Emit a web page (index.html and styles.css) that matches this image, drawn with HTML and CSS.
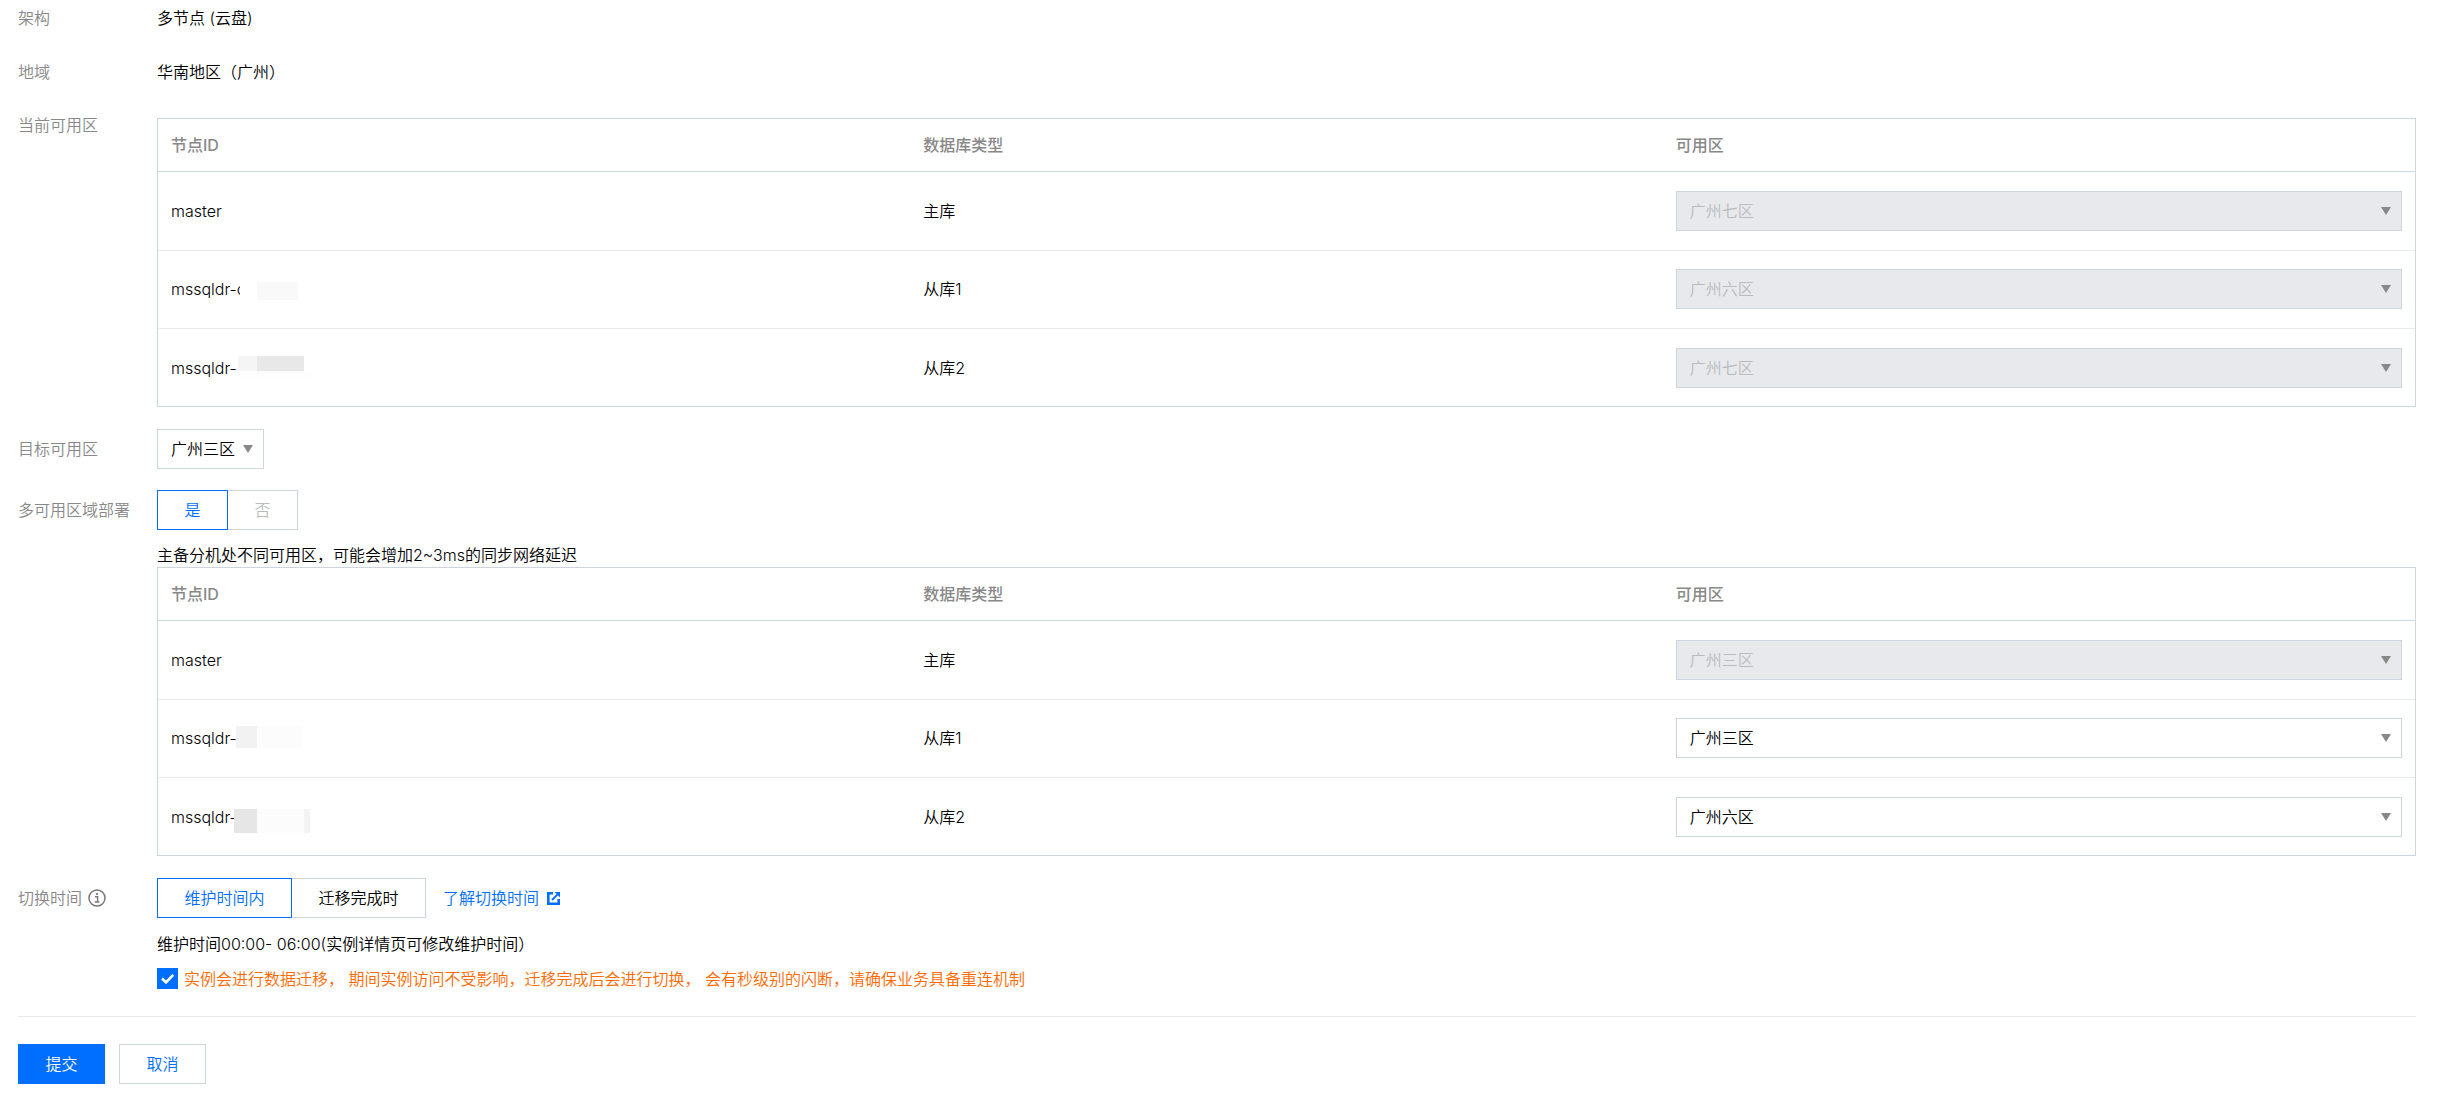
FILE: index.html
```html
<!DOCTYPE html>
<html lang="zh-CN">
<head>
<meta charset="utf-8">
<title>迁移可用区</title>
<link rel="stylesheet" href="styles.css">
</head>
<body>
<form class="page">
  <div class="row row-plain"><div class="label">架构</div><div class="value">多节点 (云盘)</div></div>
  <div class="row row-plain row-region"><div class="label">地域</div><div class="value">华南地区（广州）</div></div>

  <div class="row row-current">
    <div class="label label-table">当前可用区</div>
    <div class="content">
      <div class="table-box">
        <table class="zones">
          <thead><tr><th>节点ID</th><th>数据库类型</th><th>可用区</th></tr></thead>
          <tbody>
            <tr><td>master</td><td>主库</td><td><div class="select disabled"><span>广州七区</span><i class="caret"></i></div></td></tr>
            <tr><td><span class="node">mssqldr-c<i class="patch p-a1"></i><i class="patch p-a2"></i></span></td><td>从库1</td><td><div class="select disabled"><span>广州六区</span><i class="caret"></i></div></td></tr>
            <tr><td><span class="node">mssqldr-<i class="patch p-b1"></i><i class="patch p-b2"></i><i class="patch p-b3"></i></span></td><td>从库2</td><td><div class="select disabled"><span>广州七区</span><i class="caret"></i></div></td></tr>
          </tbody>
        </table>
      </div>
    </div>
  </div>

  <div class="row row-target">
    <div class="label">目标可用区</div>
    <div class="content"><div class="select inline"><span>广州三区</span><i class="caret"></i></div></div>
  </div>

  <div class="row row-multi">
    <div class="label">多可用区域部署</div>
    <div class="content">
      <div class="toggle toggle-small"><button type="button" class="opt active">是</button><button type="button" class="opt muted">否</button></div>
      <div class="note">主备分机处不同可用区，可能会增加2~3ms的同步网络延迟</div>
      <div class="table-box">
        <table class="zones">
          <thead><tr><th>节点ID</th><th>数据库类型</th><th>可用区</th></tr></thead>
          <tbody>
            <tr><td>master</td><td>主库</td><td><div class="select disabled"><span>广州三区</span><i class="caret"></i></div></td></tr>
            <tr><td><span class="node">mssqldr-<i class="patch p-c1"></i><i class="patch p-c2"></i></span></td><td>从库1</td><td><div class="select"><span>广州三区</span><i class="caret"></i></div></td></tr>
            <tr><td><span class="node">mssqldr-<i class="patch p-d1"></i><i class="patch p-d2"></i><i class="patch p-d3"></i></span></td><td>从库2</td><td><div class="select"><span>广州六区</span><i class="caret"></i></div></td></tr>
          </tbody>
        </table>
      </div>
    </div>
  </div>

  <div class="row row-switch">
    <div class="label label-icon">切换时间
      <svg class="info" viewBox="0 0 18 18" width="18" height="18" aria-hidden="true"><circle cx="9" cy="9" r="8" fill="none" stroke="#777" stroke-width="1.5"/><rect x="8.1" y="4" width="1.9" height="1.9" fill="#777"/><path d="M7 7.7h2.6v5.2M6.8 13h4.6" fill="none" stroke="#777" stroke-width="1.4"/></svg>
    </div>
    <div class="content">
      <div class="switch-line">
        <div class="toggle toggle-wide"><button type="button" class="opt active">维护时间内</button><button type="button" class="opt">迁移完成时</button></div>
        <a class="link" href="#">了解切换时间<svg class="ext" viewBox="0 0 13 13" width="13" height="13" aria-hidden="true"><path d="M6 1.3H1.3v10.4h10.4V7" fill="none" stroke="#006eff" stroke-width="2.6"/><path d="M5 8 10.6 2.4" fill="none" stroke="#006eff" stroke-width="2"/><path d="M7.6 0H13v5.4z" fill="#006eff"/></svg></a>
      </div>
      <div class="note note-time">维护时间00:00- 06:00(实例详情页可修改维护时间）</div>
      <label class="confirm">
        <svg class="check" viewBox="0 0 21 21" width="21" height="21" aria-hidden="true"><rect width="21" height="21" fill="#006eff"/><path d="M5 10.5 9 14.5 16.2 6.8" fill="none" stroke="#fff" stroke-width="2.6"/></svg>
        <span>实例会进行数据迁移， 期间实例访问不受影响，迁移完成后会进行切换， 会有秒级别的闪断，请确保业务具备重连机制</span>
      </label>
    </div>
  </div>

  <div class="footer">
    <button type="button" class="btn btn-primary">提交</button>
    <button type="button" class="btn">取消</button>
  </div>
</form>
</body>
</html>
```

FILE: styles.css
```css
* { box-sizing: border-box; }
html, body { margin: 0; background: #fff; }
body {
  font-family: "Inter", "Noto Sans CJK SC", sans-serif;
  font-size: 16px;
  font-weight: 350;
  line-height: 24px;
  color: #000;
}
.page { padding: 0 24px 0 18px; }

.row { display: grid; grid-template-columns: 139px 1fr; }
.row-plain { height: 36px; align-items: center; }
.row-region { margin-top: 18px; }
.row-current { margin-top: 18px; }
.row-target { margin-top: 22px; }
.row-multi { margin-top: 21px; }
.row-switch { margin-top: 22px; }

.label { color: #888; }
.label-table { padding-top: 5px; }
.row-target .label, .row-multi .label { padding-top: 8px; }
.label-icon { display: flex; align-items: center; gap: 6px; height: 40px; }
.row-current .content { padding-top: 10px; }
.row-current .label { padding-top: 5px; }

.table-box { border: 1px solid #cfd5de; }
.zones { width: 100%; border-collapse: separate; border-spacing: 0; table-layout: fixed; }
.zones th, .zones td { padding: 0 13px; text-align: left; }
.zones th { height: 53px; font-weight: 500; color: #888; border-bottom: 1px solid #cfd5de; }
.zones td { height: 78px; border-bottom: 1px solid #e7eaef; }
.zones tbody tr:first-child td { height: 79px; }
.zones tbody tr:nth-child(2) td { padding-bottom: 1px; }
.zones tbody tr:last-child td { height: 77px; border-bottom: 0; }

.select {
  display: flex; align-items: center; justify-content: space-between;
  height: 40px; padding: 0 10px 0 13px;
  border: 1px solid #cfd5de; background: #fff;
}
.select.inline { display: inline-flex; width: 107px; }
.select.disabled { background: #e7e9ed; color: #bbb; }
.caret { width: 0; height: 0; border-left: 5px solid transparent; border-right: 5px solid transparent; border-top: 8px solid #888; }

.toggle { display: flex; height: 40px; }
.opt {
  height: 40px; padding: 0; margin: 0; font: inherit; background: #fff; color: #000;
  border: 1px solid #cfd5de; border-radius: 0;
}
.opt + .opt { margin-left: -1px; }
.opt.active { position: relative; z-index: 1; border-color: #006eff; color: #006eff; }
.opt.muted { color: #bbb; }
.toggle-small .opt { width: 71px; }
.toggle-wide .opt { width: 135px; }

.note { height: 24px; margin-top: 13px; white-space: nowrap; }
.note-time { margin-top: 14px; }

.switch-line { display: flex; align-items: center; gap: 17px; }
.link { display: flex; align-items: center; gap: 8px; color: #006eff; text-decoration: none; }

.confirm { display: flex; align-items: center; gap: 6px; height: 21px; margin-top: 12px; color: #ff6a00; }
.check { flex: none; }

.footer { display: flex; gap: 14px; margin-top: 27px; padding-top: 27px; border-top: 1px solid #e7eaef; }
.btn { width: 87px; height: 40px; padding: 0; font: inherit; background: #fff; color: #006eff; border: 1px solid #cfd5de; border-radius: 0; }
.btn-primary { background: #006eff; border-color: #006eff; color: #fff; }

.node { position: relative; display: inline-block; }
.patch { position: absolute; display: block; }
.p-a1 { left: 69px; top: 3px; width: 17px; height: 22px; background: #fff; }
.p-a2 { left: 86px; top: 5px; width: 41px; height: 18px; background: #f9f9f9; }
.p-b1 { left: 67px; top: 0; width: 19px; height: 15px; background: #f5f5f5; }
.p-b2 { left: 86px; top: 0; width: 47px; height: 15px; background: #e8e8e8; }
.p-b3 { left: 67px; top: 15px; width: 74px; height: 7px; background: #fdfdfd; }
.p-c1 { left: 65px; top: 0; width: 21px; height: 22px; background: #f2f2f2; }
.p-c2 { left: 86px; top: 0; width: 45px; height: 22px; background: #fcfcfc; }
.p-d1 { left: 63px; top: 4px; width: 23px; height: 24px; background: #e6e6e6; }
.p-d2 { left: 86px; top: 4px; width: 47px; height: 24px; background: #fcfcfc; }
.p-d3 { left: 133px; top: 4px; width: 6px; height: 24px; background: #f3f3f3; }
```
